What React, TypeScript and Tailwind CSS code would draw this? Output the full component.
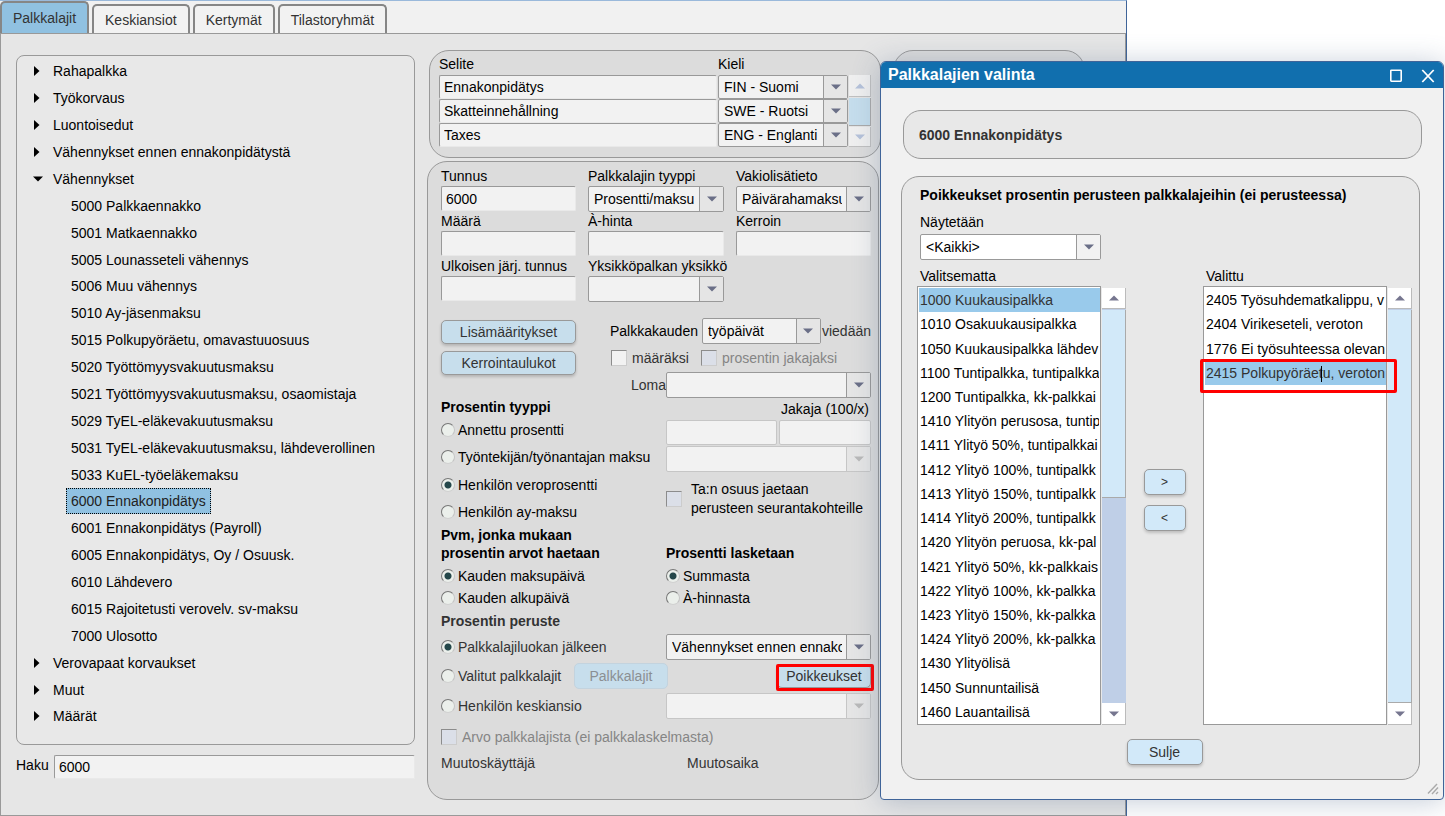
import React, { useId, useState } from 'react';
import { clsx } from 'clsx';

type TreeItem = { label: string; level: 0 | 1; open?: boolean };

const TABS = ['Palkkalajit', 'Keskiansiot', 'Kertymät', 'Tilastoryhmät'];

const TREE: TreeItem[] = [
    { label: 'Rahapalkka', level: 0 },
    { label: 'Työkorvaus', level: 0 },
    { label: 'Luontoisedut', level: 0 },
    { label: 'Vähennykset ennen ennakonpidätystä', level: 0 },
    { label: 'Vähennykset', level: 0, open: true },
    { label: '5000 Palkkaennakko', level: 1 },
    { label: '5001 Matkaennakko', level: 1 },
    { label: '5005 Lounasseteli vähennys', level: 1 },
    { label: '5006 Muu vähennys', level: 1 },
    { label: '5010 Ay-jäsenmaksu', level: 1 },
    { label: '5015 Polkupyöräetu, omavastuuosuus', level: 1 },
    { label: '5020 Työttömyysvakuutusmaksu', level: 1 },
    { label: '5021 Työttömyysvakuutusmaksu, osaomistaja', level: 1 },
    { label: '5029 TyEL-eläkevakuutusmaksu', level: 1 },
    { label: '5031 TyEL-eläkevakuutusmaksu, lähdeverollinen', level: 1 },
    { label: '5033 KuEL-työeläkemaksu', level: 1 },
    { label: '6000 Ennakonpidätys', level: 1 },
    { label: '6001 Ennakonpidätys (Payroll)', level: 1 },
    { label: '6005 Ennakonpidätys, Oy / Osuusk.', level: 1 },
    { label: '6010 Lähdevero', level: 1 },
    { label: '6015 Rajoitetusti verovelv. sv-maksu', level: 1 },
    { label: '7000 Ulosotto', level: 1 },
    { label: 'Verovapaat korvaukset', level: 0 },
    { label: 'Muut', level: 0 },
    { label: 'Määrät', level: 0 },
];

const LANGUAGES = [
    { text: 'Ennakonpidätys', language: 'FIN - Suomi' },
    { text: 'Skatteinnehållning', language: 'SWE - Ruotsi' },
    { text: 'Taxes', language: 'ENG - Englanti' },
];

const UNSELECTED = [
    '1000 Kuukausipalkka',
    '1010 Osakuukausipalkka',
    '1050 Kuukausipalkka lähdev',
    '1100 Tuntipalkka, tuntipalkka',
    '1200 Tuntipalkka, kk-palkkai',
    '1410 Ylityön perusosa, tuntip',
    '1411 Ylityö 50%, tuntipalkkai',
    '1412 Ylityö 100%, tuntipalkk',
    '1413 Ylityö 150%, tuntipalkk',
    '1414 Ylityö 200%, tuntipalkk',
    '1420 Ylityön peruosa, kk-pal',
    '1421 Ylityö 50%, kk-palkkais',
    '1422 Ylityö 100%, kk-palkka',
    '1423 Ylityö 150%, kk-palkka',
    '1424 Ylityö 200%, kk-palkka',
    '1430 Ylityölisä',
    '1450 Sunnuntailisä',
    '1460 Lauantailisä',
];

const SELECTED = [
    '2405 Työsuhdematkalippu, v',
    '2404 Virikeseteli, veroton',
    '1776 Ei työsuhteessa olevan',
    '2415 Polkupyöräetu, veroton',
];

const LIST_ROWS = 18;

const Triangle: React.FC<{ up?: boolean; className?: string }> = ({
    up,
    className,
}) => (
    <svg viewBox="0 0 10 6" className={clsx('h-1.5 w-2.5', className)}>
        <path
            d={up ? 'M0 5.5 5 .5l5 5z' : 'M0 .5h10l-5 5z'}
            fill="currentColor"
        />
    </svg>
);

const TextBox: React.FC<React.InputHTMLAttributes<HTMLInputElement>> = ({
    className,
    ...props
}) => (
    <input
        type="text"
        className={clsx(
            'min-w-0 rounded-xs border bg-[#f2f2f2] px-1 text-black outline-none',
            props.disabled
                ? 'border-[#c6c6c6]'
                : 'border-t-[#999] border-r-[#e9e9e9] border-b-[#e9e9e9] border-l-[#999]',
            className
        )}
        {...props}
    />
);

interface DropdownProps {
    id?: string;
    value?: string;
    label?: string;
    disabled?: boolean;
    white?: boolean;
    className?: string;
}

const Dropdown: React.FC<DropdownProps> = ({
    id,
    value = '',
    label,
    disabled,
    white,
    className,
}) => (
    <div className={clsx('relative', className)}>
        <select
            id={id}
            aria-label={label}
            disabled={disabled}
            className={clsx(
                'block size-full appearance-none rounded-xs border pr-7 pl-[5px] text-black opacity-100 outline-none',
                white ? 'bg-white' : 'bg-[#f2f2f2]',
                disabled ? 'border-[#c6c6c6]' : 'border-[#999]'
            )}
        >
            <option>{value}</option>
        </select>
        <span
            className={clsx(
                'pointer-events-none absolute inset-y-px right-px flex w-6 items-center justify-center border-l',
                white ? 'bg-[#f2f2f2]' : 'bg-[#e5e5e5]',
                disabled
                    ? 'border-[#c6c6c6] text-[#b9b9b9]'
                    : 'border-[#999] text-[#6a6f87]'
            )}
        >
            <Triangle />
        </span>
    </div>
);

const Radio: React.FC<{
    name: string;
    label: string;
    checked?: boolean;
    className?: string;
}> = ({ name, label, checked, className }) => (
    <label className={clsx('flex items-center gap-[3px]', className)}>
        <input
            type="radio"
            name={name}
            defaultChecked={checked}
            className="size-3.5 shrink-0 appearance-none rounded-full border border-t-[#777] border-r-[#c4c4c4] border-b-[#d0d0d0] border-l-[#777] bg-[#ebefeb] checked:bg-[radial-gradient(circle,#24474a_0_3px,#ebefeb_4px)]"
        />
        <span className="whitespace-nowrap">{label}</span>
    </label>
);

const Checkbox: React.FC<{
    label: React.ReactNode;
    disabled?: boolean;
    muted?: boolean;
    className?: string;
}> = ({ label, disabled, muted, className }) => (
    <label
        className={clsx(
            'flex items-center gap-[5px]',
            muted && 'text-[#858585]',
            className
        )}
    >
        <input
            type="checkbox"
            disabled={disabled}
            className={clsx(
                'size-4 shrink-0 appearance-none border border-t-[#8c8c8c] border-r-[#ccc] border-b-[#ccc] border-l-[#8c8c8c]',
                disabled ? 'bg-[#dbdfe8]' : 'bg-[#f2f2f2]'
            )}
        />
        <span>{label}</span>
    </label>
);

const PushButton: React.FC<React.ButtonHTMLAttributes<HTMLButtonElement>> = ({
    className,
    ...props
}) => (
    <button
        type="button"
        className={clsx(
            'flex items-center justify-center rounded-[5px] border',
            props.disabled
                ? 'border-[#c3d3de] text-[#8b8f93]'
                : 'border-[#999] text-[#333] shadow-[0_2px_3px_rgba(0,0,0,0.18)]',
            className
        )}
        {...props}
    />
);

const Field: React.FC<{
    label: string;
    value?: string;
    dropdown?: boolean;
}> = ({ label, value, dropdown }) => {
    const id = useId();
    return (
        <div className="flex flex-col">
            <label htmlFor={id} className="leading-[19px] whitespace-nowrap">
                {label}
            </label>
            {dropdown ? (
                <Dropdown id={id} value={value} className="h-[26px]" />
            ) : (
                <div className="flex h-[26px] pb-px">
                    <TextBox id={id} defaultValue={value} className="w-full" />
                </div>
            )}
        </div>
    );
};

const ScrollBar: React.FC<{ partial?: boolean }> = ({ partial }) => (
    <div className="flex w-6 flex-col bg-[#bfcfe7]">
        <button
            type="button"
            aria-label="Vieritä ylös"
            className="flex h-[21px] items-center justify-center border-r border-b border-[#bbb] bg-white text-[#76768f]"
        >
            <Triangle up />
        </button>
        <div
            className={clsx(
                'mt-px border-r border-b border-[#aaa] bg-[#d2e9f9]',
                partial ? 'h-[188px]' : 'flex-1'
            )}
        />
        <button
            type="button"
            aria-label="Vieritä alas"
            className="mt-auto flex h-[22px] items-center justify-center border-r border-b border-[#bbb] bg-white text-[#76768f]"
        >
            <Triangle />
        </button>
    </div>
);

const ListBox: React.FC<{
    label: string;
    items: string[];
    activeIndex: number;
    partial?: boolean;
    children?: React.ReactNode;
}> = ({ label, items, activeIndex, partial, children }) => {
    const id = useId();
    const [active, setActive] = useState(activeIndex);
    return (
        <div className="flex w-[209px] flex-col">
            <span id={id} className="pl-[3px] leading-5">
                {label}
            </span>
            <div className="relative flex h-[439px] gap-px">
                <ul
                    role="listbox"
                    aria-labelledby={id}
                    className="flex w-[184px] flex-col border border-[#999] bg-white pt-px pl-px"
                >
                    {Array.from({ length: LIST_ROWS }, (_, i) => (
                        <li
                            key={i}
                            role="option"
                            aria-selected={i === active}
                            onClick={() => items[i] && setActive(i)}
                            className={clsx(
                                'flex flex-1 items-center pr-px pl-px',
                                i === active
                                    ? 'bg-[#99caeb] text-[#333]'
                                    : 'text-black'
                            )}
                        >
                            <span className="flex-1 overflow-hidden whitespace-nowrap">
                                {items[i]}
                            </span>
                        </li>
                    ))}
                </ul>
                <div className="flex pt-[2px]">
                    <ScrollBar partial={partial} />
                </div>
                {children}
            </div>
        </div>
    );
};

const Tree: React.FC = () => {
    const [selected, setSelected] = useState('6000 Ennakonpidätys');
    return (
        <ul
            role="tree"
            className="flex h-[690px] flex-col rounded-lg border border-[#999] bg-[#e8e8e8] pt-[2px] pb-[14px]"
        >
            {TREE.map(({ label, level, open }) => (
                <li
                    key={label}
                    role="treeitem"
                    aria-expanded={level === 0 ? !!open : undefined}
                    aria-selected={label === selected}
                    onClick={() => setSelected(label)}
                    className={clsx(
                        'flex flex-1 items-center',
                        level === 0 ? 'pl-4' : 'pl-[49px]'
                    )}
                >
                    {level === 0 && (
                        <svg
                            viewBox="0 0 10 10"
                            className="mr-[9px] size-2.5"
                        >
                            <path
                                d={open ? 'M0 2.5h10l-5 5z' : 'M1 0v10l5.5-5z'}
                            />
                        </svg>
                    )}
                    <span
                        className={clsx(
                            'border border-dotted leading-6 whitespace-nowrap',
                            level === 1 && 'px-1',
                            label === selected
                                ? 'border-black bg-[#90c1e1] text-[#222]'
                                : 'border-transparent'
                        )}
                    >
                        {label}
                    </span>
                </li>
            ))}
        </ul>
    );
};

const DescriptionPanel: React.FC = () => (
    <section className="ml-0.5 h-[108px] w-[452px] rounded-[20px] border border-[#999] bg-[#dcdcdc] px-[9px] pt-[3px]">
        <div className="flex leading-[21px]">
            <span className="w-[279px]">Selite</span>
            <span>Kieli</span>
        </div>
        <div className="flex">
            <div className="flex flex-col">
                {LANGUAGES.map(({ text, language }) => (
                    <div key={language} className="flex h-6 gap-px">
                        <TextBox
                            aria-label="Selite"
                            defaultValue={text}
                            className="w-[278px]"
                        />
                        <Dropdown
                            label="Kieli"
                            value={language}
                            className="w-[130px]"
                        />
                    </div>
                ))}
            </div>
            <div className="ml-px flex w-6 flex-col bg-[#e4e4e4] text-[#b5c2da]">
                <button
                    type="button"
                    aria-label="Edellinen"
                    className="flex h-[22px] items-center justify-center border-r border-b border-[#c0c0c0] bg-[#efefef]"
                >
                    <Triangle up />
                </button>
                <div className="my-px flex-1 border-r border-b border-[#aaa] bg-[#c5ddec]" />
                <button
                    type="button"
                    aria-label="Seuraava"
                    className="flex h-5 items-center justify-center border-r border-b border-[#c0c0c0] bg-[#efefef]"
                >
                    <Triangle />
                </button>
            </div>
        </div>
    </section>
);

const DetailsPanel: React.FC = () => {
    const lomaId = useId();
    return (
        <section className="mt-[3px] h-[639px] w-[452px] rounded-[20px] border border-[#999] bg-[#dcdcdc] pt-[5px] pr-[7px] pl-[13px]">
            <div className="grid grid-cols-[135px_136px_135px] gap-x-3">
                <Field label="Tunnus" value="6000" />
                <Field
                    label="Palkkalajin tyyppi"
                    value="Prosentti/maksu"
                    dropdown
                />
                <Field label="Vakiolisätieto" value="Päivärahamaksu" dropdown />
                <Field label="Määrä" />
                <Field label="À-hinta" />
                <Field label="Kerroin" />
                <Field label="Ulkoisen järj. tunnus" />
                <Field label="Yksikköpalkan yksikkö" dropdown />
            </div>

            <div className="mt-4 flex justify-between">
                <div className="flex w-[135px] flex-col gap-[7px] pt-0.5">
                    <PushButton className="h-6 bg-[#c7deec]">
                        Lisämääritykset
                    </PushButton>
                    <PushButton className="h-6 bg-[#c7deec]">
                        Kerrointaulukot
                    </PushButton>
                </div>
                <div className="flex flex-col text-[#333]">
                    <div className="flex h-[26px] items-center justify-end">
                        <span className="mr-1 text-black">Palkkakauden</span>
                        <Dropdown
                            label="Palkkakauden"
                            value="työpäivät"
                            className="h-full w-[119px]"
                        />
                        <span className="ml-px">viedään</span>
                    </div>
                    <div className="flex h-[28px] items-center pl-px">
                        <Checkbox label="määräksi" className="w-[90px]" />
                        <Checkbox label="prosentin jakajaksi" disabled muted />
                    </div>
                    <div className="flex h-[26px] items-center justify-end">
                        <label htmlFor={lomaId}>Loma</label>
                        <Dropdown id={lomaId} className="h-full w-[205px]" />
                    </div>
                </div>
            </div>

            <div className="flex h-[128px]">
                <div className="flex w-[225px] shrink-0 flex-col">
                    <h3 className="leading-[18px] font-bold">
                        Prosentin tyyppi
                    </h3>
                    <Radio
                        name="tyyppi"
                        label="Annettu prosentti"
                        className="flex-1"
                    />
                    <Radio
                        name="tyyppi"
                        label="Työntekijän/työnantajan maksu"
                        className="flex-1"
                    />
                    <Radio
                        name="tyyppi"
                        label="Henkilön veroprosentti"
                        checked
                        className="flex-1"
                    />
                    <Radio
                        name="tyyppi"
                        label="Henkilön ay-maksu"
                        className="flex-1"
                    />
                </div>
                <div className="flex min-w-0 flex-1 flex-col">
                    <span className="pr-0.5 text-right leading-[22px]">
                        Jakaja (100/x)
                    </span>
                    <div className="flex h-[25px] gap-0.5">
                        <TextBox
                            aria-label="Prosentti"
                            disabled
                            className="w-[111px] shrink-0"
                        />
                        <TextBox
                            aria-label="Jakaja (100/x)"
                            disabled
                            className="flex-1"
                        />
                    </div>
                    <Dropdown
                        label="Työntekijän/työnantajan maksu"
                        disabled
                        className="mt-px h-[26px]"
                    />
                    <Checkbox
                        disabled
                        className="gap-[9px] pt-2 leading-[19px] whitespace-nowrap"
                        label={
                            <>
                                Ta:n osuus jaetaan
                                <br />
                                perusteen seurantakohteille
                            </>
                        }
                    />
                </div>
            </div>

            <div className="flex items-end">
                <div className="w-[225px]">
                    <h3 className="mb-[3px] leading-[18px] font-bold">
                        Pvm, jonka mukaan
                        <br />
                        prosentin arvot haetaan
                    </h3>
                    <Radio
                        name="pvm"
                        label="Kauden maksupäivä"
                        checked
                        className="h-[22px]"
                    />
                    <Radio
                        name="pvm"
                        label="Kauden alkupäivä"
                        className="h-[22px]"
                    />
                </div>
                <div>
                    <h3 className="mb-[3px] leading-[18px] font-bold">
                        Prosentti lasketaan
                    </h3>
                    <Radio
                        name="laskenta"
                        label="Summasta"
                        checked
                        className="h-[22px]"
                    />
                    <Radio
                        name="laskenta"
                        label="À-hinnasta"
                        className="h-[22px]"
                    />
                </div>
            </div>

            <div className="text-[#333]">
                <h3 className="leading-6 font-bold">Prosentin peruste</h3>
                <div className="flex h-[27px] items-center">
                    <Radio
                        name="peruste"
                        label="Palkkalajiluokan jälkeen"
                        checked
                        className="w-[225px]"
                    />
                    <Dropdown
                        label="Palkkalajiluokka"
                        value="Vähennykset ennen ennakonpidätystä"
                        className="h-[26px] flex-1"
                    />
                </div>
                <div className="flex h-8 items-center">
                    <Radio
                        name="peruste"
                        label="Valitut palkkalajit"
                        className="w-[133px]"
                    />
                    <PushButton
                        disabled
                        className="h-[26px] w-[94px] bg-[#c7deec]"
                    >
                        Palkkalajit
                    </PushButton>
                    <div className="relative ml-auto">
                        <PushButton className="h-6 w-[94px] bg-[#c7deec]">
                            Poikkeukset
                        </PushButton>
                        <span className="pointer-events-none absolute top-0 -right-[3px] -bottom-[3px] -left-px rounded-xs border-3 border-[#f00]" />
                    </div>
                </div>
                <div className="flex h-[27px] items-center">
                    <Radio
                        name="peruste"
                        label="Henkilön keskiansio"
                        className="w-[225px]"
                    />
                    <Dropdown
                        label="Henkilön keskiansio"
                        disabled
                        className="h-[26px] flex-1"
                    />
                </div>
                <Checkbox
                    label="Arvo palkkalajista (ei palkkalaskelmasta)"
                    disabled
                    muted
                    className="h-9"
                />
                <div className="flex leading-4">
                    <span className="w-[246px]">Muutoskäyttäjä</span>
                    <span>Muutosaika</span>
                </div>
            </div>
        </section>
    );
};

const MainWindow: React.FC = () => {
    const [tab, setTab] = useState(TABS[0]);
    const searchId = useId();
    return (
        <main className="flex min-h-screen w-[78%] flex-col border-t border-r border-t-[#9ab9db] border-r-[#3f6499] bg-[#e6e6e6]">
            <nav
                role="tablist"
                className="flex h-[33px] items-end gap-[3px] border-b border-[#999] bg-[#f1f1f1]"
            >
                {TABS.map((name) => (
                    <button
                        key={name}
                        type="button"
                        role="tab"
                        aria-selected={name === tab}
                        onClick={() => setTab(name)}
                        className={clsx(
                            'rounded-t-[5px] border-2 border-b-0 border-[#868686] px-[11px] text-[#333]',
                            name === tab
                                ? 'h-8 bg-[#90c1e1]'
                                : 'h-[29px] bg-[#f2f2f2]'
                        )}
                    >
                        {name}
                    </button>
                ))}
            </nav>
            <div className="flex flex-1 gap-3 border-r border-b border-l border-[#999] pt-4 pl-[15px]">
                <div className="flex w-[399px] shrink-0 flex-col pt-[5px]">
                    <Tree />
                    <div className="mt-[10px] flex">
                        <label htmlFor={searchId} className="w-[38px] leading-5">
                            Haku
                        </label>
                        <TextBox
                            id={searchId}
                            defaultValue="6000"
                            className="h-6 flex-1"
                        />
                    </div>
                </div>
                <div className="w-[454px] shrink-0">
                    <DescriptionPanel />
                    <DetailsPanel />
                </div>
                <section className="h-[108px] w-[192px] shrink-0 rounded-[20px] border border-[#999] bg-[#dcdcdc]" />
            </div>
        </main>
    );
};

const SelectionDialog: React.FC = () => {
    const filterId = useId();
    return (
        <div
            role="dialog"
            aria-label="Palkkalajien valinta"
            className="absolute top-[61px] right-px flex w-[564px] flex-col rounded-t-md rounded-b-sm border border-[#3f6499] bg-[#f1f1f1] shadow-[0_2px_28px_rgba(70,95,135,0.32)]"
        >
            <header className="flex h-[26px] items-center justify-between rounded-t-[5px] bg-[#116fae] pr-2 pl-[7px] text-white">
                <h2 className="text-base font-bold">Palkkalajien valinta</h2>
                <div className="flex gap-[18px] pt-0.5">
                    <button type="button" aria-label="Suurenna">
                        <svg
                            viewBox="0 0 14 14"
                            className="size-3.5"
                            fill="none"
                            stroke="currentColor"
                            strokeWidth="1.6"
                        >
                            <rect x="1.8" y="1.2" width="10.4" height="11" rx=".6" />
                        </svg>
                    </button>
                    <button type="button" aria-label="Sulje ikkuna">
                        <svg
                            viewBox="0 0 14 14"
                            className="size-3.5"
                            fill="none"
                            stroke="currentColor"
                            strokeWidth="1.8"
                        >
                            <path d="m1.3 1 11.4 12M12.7 1 1.3 13" />
                        </svg>
                    </button>
                </div>
            </header>
            <div className="flex flex-col gap-[17px] pt-[22px] pr-[21px] pb-[19px] pl-5">
                <section className="ml-0.5 flex h-[49px] items-center rounded-[18px] border border-[#999] bg-[#e8e8e8] pt-px pl-[15px] font-bold text-[#333]">
                    6000 Ennakonpidätys
                </section>
                <section className="mr-0.5 flex h-[604px] flex-col rounded-[18px] border border-[#999] bg-[#e8e8e8] pt-2 pr-[7px] pl-[15px]">
                    <h3 className="pl-[3px] leading-5 font-bold">
                        Poikkeukset prosentin perusteen palkkalajeihin (ei
                        perusteessa)
                    </h3>
                    <label
                        htmlFor={filterId}
                        className="mt-[7px] pl-[3px] leading-5"
                    >
                        Näytetään
                    </label>
                    <Dropdown
                        id={filterId}
                        value="<Kaikki>"
                        white
                        className="mt-0.5 ml-[3px] h-[26px] w-[181px]"
                    />
                    <div className="mt-[6px] flex justify-between">
                        <ListBox
                            label="Valitsematta"
                            items={UNSELECTED}
                            activeIndex={0}
                            partial
                        />
                        <div className="flex flex-col justify-center gap-[10px] pt-2">
                            <PushButton className="h-[26px] w-[42px] bg-[#d2e9f9] text-xs">
                                &gt;
                            </PushButton>
                            <PushButton className="h-[26px] w-[42px] bg-[#d2e9f9] text-xs">
                                &lt;
                            </PushButton>
                        </div>
                        <ListBox
                            label="Valittu"
                            items={SELECTED}
                            activeIndex={3}
                        >
                            <span className="pointer-events-none absolute top-20 left-[118px] h-4 w-px bg-black" />
                            <span className="pointer-events-none absolute top-[73px] -left-[3px] h-[34px] w-[197px] rounded-xs border-3 border-[#f00]" />
                        </ListBox>
                    </div>
                    <PushButton className="mt-[14px] h-[26px] w-[76px] self-center bg-[#d2e9f9]">
                        Sulje
                    </PushButton>
                </section>
            </div>
            <svg
                viewBox="0 0 12 12"
                className="pointer-events-none absolute right-1 bottom-1 size-3"
                stroke="#aaa"
                strokeWidth="1.4"
            >
                <path d="M1 10.5 10 1M5 11l6-6.5M9 11l2-2" />
            </svg>
        </div>
    );
};

export default function App() {
    return (
        <div className="relative min-h-screen overflow-hidden bg-white font-['Liberation_Sans',Arial,sans-serif] text-sm text-black">
            <MainWindow />
            <SelectionDialog />
        </div>
    );
}
